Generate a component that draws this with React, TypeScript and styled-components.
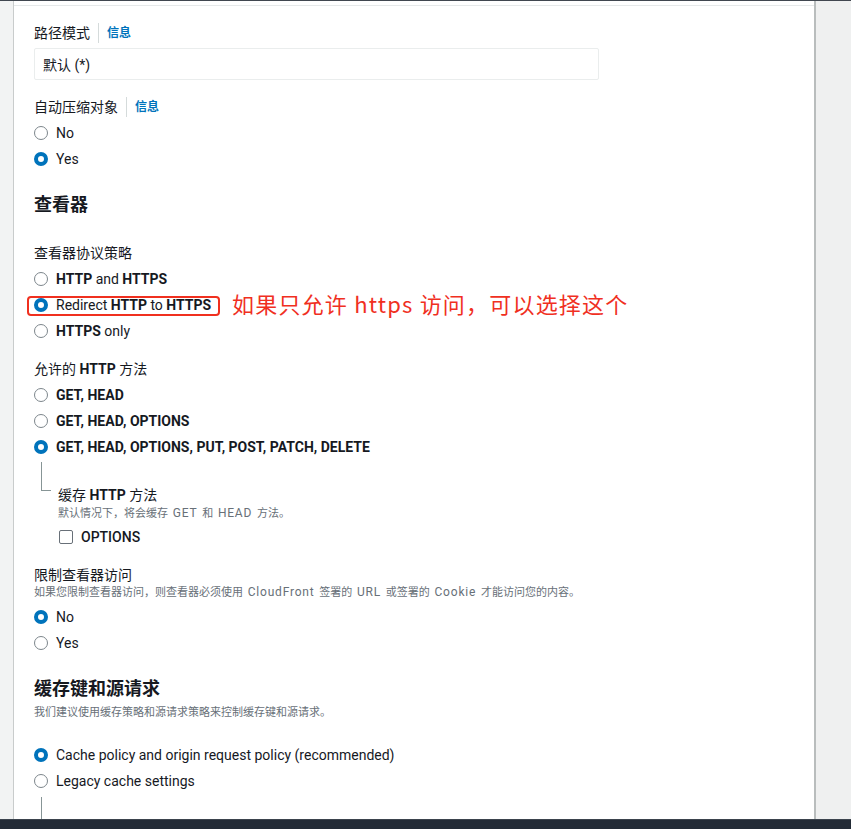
import styled, { createGlobalStyle } from "styled-components";

const GlobalStyle = createGlobalStyle`
  html, body {
    margin: 0;
    padding: 0;
  }
  body {
    font-family: Roboto, "Noto Sans CJK SC", sans-serif;
    color: #16191f;
    background: #fff;
  }
`;

const Page = styled.div`
  height: 829px;
  display: flex;
  flex-direction: column;
  overflow: hidden;
  border-top: 1px solid #414750;
  box-sizing: border-box;
`;

const Body = styled.div`
  flex: 1;
  display: flex;
  min-height: 0;
`;

const LeftStrip = styled.div`
  width: 13px;
  background: #f2f3f3;
  border-right: 1px solid #c9cccc;
`;

const RightStrip = styled.div`
  flex: 1;
  background: #eff0f0;
  border-left: 2px solid #b9bdbd;
`;

const Main = styled.div`
  width: 800px;
  background: #fff;
  padding-top: 4px;
  overflow: hidden;
`;

const Panel = styled.div`
  border-top: 1px solid #e6e9ea;
  padding: 17px 20px 0;
  display: flex;
  flex-direction: column;
`;

const Label = styled.div<{ $top?: number }>`
  display: flex;
  align-items: center;
  font-size: 14px;
  line-height: 20px;
  margin-top: ${(p) => p.$top ?? 0}px;

  b {
    font-weight: 700;
  }
`;

const Info = styled.a`
  margin-left: 8px;
  padding-left: 8px;
  border-left: 1px solid #d5dbdb;
  color: #0073bb;
  font-weight: 700;
  font-size: 12px;
  text-decoration: none;
  line-height: 20px;
`;

const Input = styled.div`
  margin-top: 5px;
  width: 565px;
  height: 32px;
  box-sizing: border-box;
  border: 1px solid #eaeded;
  border-radius: 2px;
  padding: 0 8px;
  display: flex;
  align-items: center;
  font-size: 14px;
`;

const Heading = styled.h2<{ $top: number }>`
  margin: ${(p) => p.$top}px 0 0;
  font-size: 18px;
  line-height: 24px;
  font-weight: 700;
`;

const Desc = styled.div<{ $top?: number }>`
  margin-top: ${(p) => p.$top ?? 0}px;
  height: 16px;
  font-size: 11px;
  line-height: 16px;
  color: #687078;
  white-space: nowrap;
`;

// latin words inside the grey hints sit a little wider than the CJK text
const Latin = styled.span`
  font-size: 12px;
  line-height: 12px;
  letter-spacing: 0.8px;
  margin: 0 2px;
`;

const Group = styled.div<{ $top?: number }>`
  margin-top: ${(p) => p.$top ?? 3}px;
  display: flex;
  flex-direction: column;
`;

const Row = styled.label`
  position: relative;
  height: 26px;
  display: flex;
  align-items: center;
  gap: 8px;
  font-size: 14px;

  b {
    font-weight: 700;
  }
`;

const Circle = styled.span<{ $on?: boolean }>`
  width: 14px;
  height: 14px;
  box-sizing: border-box;
  border-radius: 50%;
  flex-shrink: 0;
  border: ${(p) => (p.$on ? "4.5px solid #0073bb" : "1.5px solid #7d868c")};
  background: #fff;
`;

const Box = styled.span`
  width: 14px;
  height: 14px;
  box-sizing: border-box;
  border: 1.5px solid #687078;
  border-radius: 2px;
  flex-shrink: 0;
`;

const Highlight = styled.span`
  position: absolute;
  left: -7px;
  top: 4px;
  width: 193px;
  height: 20px;
  box-sizing: border-box;
  border: 2px solid #f0301f;
  border-radius: 4px;
`;

const Note = styled.span`
  position: absolute;
  left: 198px;
  top: -4px;
  white-space: nowrap;
  color: #f0301f;
  font-family: "Noto Sans CJK SC", sans-serif;
  font-size: 22px;
  line-height: 30px;
  letter-spacing: 1.2px;
`;

const Tree = styled.div`
  display: flex;
  align-items: flex-start;
`;

const Connector = styled.div`
  margin-left: 7px;
  margin-top: 2px;
  width: 9px;
  height: 28px;
  border-left: 1px solid #879596;
  border-bottom: 1px solid #879596;
  flex-shrink: 0;
`;

const Branch = styled.div`
  margin-left: 7px;
  padding-top: 25px;
  display: flex;
  flex-direction: column;
`;

const CheckRow = styled(Row)`
  margin-top: 4px;
  margin-left: 1px;
  height: 22px;
  font-weight: 500;
`;

const Stem = styled.div`
  margin: 3px 0 0 7px;
  height: 40px;
  border-left: 1px solid #879596;
`;

const BottomBar = styled.div`
  height: 9px;
  background: #232b36;
  border-top: 1px solid #3b434d;
`;

function Radio({ on, children }: { on?: boolean; children: React.ReactNode }) {
  return (
    <Row>
      <Circle $on={on} />
      <span>{children}</span>
    </Row>
  );
}

export default function App() {
  return (
    <>
      <GlobalStyle />
      <Page>
        <Body>
          <LeftStrip />
          <Main>
            <Panel>
              <Label>
                路径模式<Info href="#">信息</Info>
              </Label>
              <Input>默认 (*)</Input>

              <Label $top={17}>
                自动压缩对象<Info href="#">信息</Info>
              </Label>
              <Group>
                <Radio>No</Radio>
                <Radio on>Yes</Radio>
              </Group>

              <Heading $top={21}>查看器</Heading>

              <Label $top={26}>查看器协议策略</Label>
              <Group>
                <Radio>
                  <b>HTTP</b> and <b>HTTPS</b>
                </Radio>
                <Row>
                  <Circle $on />
                  <span>
                    Redirect <b>HTTP</b> to <b>HTTPS</b>
                  </span>
                  <Highlight />
                  <Note>如果只允许 https 访问，可以选择这个</Note>
                </Row>
                <Radio>
                  <b>HTTPS</b> only
                </Radio>
              </Group>

              <Label $top={15}>
                允许的&nbsp;<b>HTTP</b>&nbsp;方法
              </Label>
              <Group>
                <Radio>
                  <b>GET, HEAD</b>
                </Radio>
                <Radio>
                  <b>GET, HEAD, OPTIONS</b>
                </Radio>
                <Radio on>
                  <b>GET, HEAD, OPTIONS, PUT, POST, PATCH, DELETE</b>
                </Radio>
              </Group>

              <Tree>
                <Connector />
                <Branch>
                  <Label>
                    缓存&nbsp;<b>HTTP</b>&nbsp;方法
                  </Label>
                  <Desc $top={1}>
                    默认情况下，将会缓存 <Latin>GET</Latin> 和 <Latin>HEAD</Latin> 方法。
                  </Desc>
                  <CheckRow>
                    <Box />
                    <span>OPTIONS</span>
                  </CheckRow>
                </Branch>
              </Tree>

              <Label $top={17}>限制查看器访问</Label>
              <Desc>
                如果您限制查看器访问，则查看器必须使用 <Latin>CloudFront</Latin> 签署的{" "}
                <Latin>URL</Latin> 或签署的 <Latin>Cookie</Latin> 才能访问您的内容。
              </Desc>
              <Group>
                <Radio on>No</Radio>
                <Radio>Yes</Radio>
              </Group>

              <Heading $top={21}>缓存键和源请求</Heading>
              <Desc $top={4}>我们建议使用缓存策略和源请求策略来控制缓存键和源请求。</Desc>
              <Group $top={21}>
                <Radio on>Cache policy and origin request policy (recommended)</Radio>
                <Radio>Legacy cache settings</Radio>
              </Group>
              <Stem />
            </Panel>
          </Main>
          <RightStrip />
        </Body>
        <BottomBar />
      </Page>
    </>
  );
}
